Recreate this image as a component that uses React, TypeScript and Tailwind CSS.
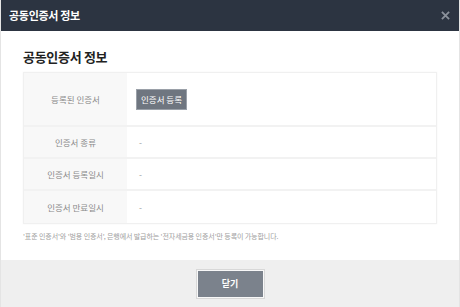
import React from 'react';

const rows = [
  { label: '인증서 종류', value: '-' },
  { label: '인증서 등록일시', value: '-' },
  { label: '인증서 만료일시', value: '-' },
];

const CertInfoModal = () => {
  return (
    <div
      className="w-[460px] h-[307px] flex flex-col bg-white border-x border-[#e4e4e4]"
      style={{ fontFamily: '"Noto Sans CJK KR", "Noto Sans", sans-serif' }}
    >
      {/* header */}
      <div className="h-[31px] shrink-0 bg-[#2c3441] flex items-center justify-between pl-[8px] pr-[9px]">
        <span className="text-[11px] font-bold text-white tracking-[-0.3px]">공동인증서 정보</span>
        <svg width="9" height="9" viewBox="0 0 10 10" className="text-[#8b919b]">
          <path d="M1 1L9 9M9 1L1 9" stroke="currentColor" strokeWidth="2" />
        </svg>
      </div>

      {/* body */}
      <div className="flex-1 px-[22px] pt-[17px]">
        <h2 className="text-[13px] font-bold text-[#222] leading-[18px] tracking-[-0.3px]">공동인증서 정보</h2>

        <div className="mt-[6px] border border-[#f0f0f0] shadow-[0_0_2px_rgba(0,0,0,0.04)] text-[8.5px]">
          <div className="flex h-[54px] border-b-2 border-[#f2f2f2]">
            <div className="w-[103px] bg-[#f8f8f8] flex items-center justify-center text-[#8a8a8a]">등록된 인증서</div>
            <div className="flex-1 flex items-center pl-[9px]">
              <button className="h-[21px] px-[4px] bg-[#6f7680] text-white text-[8.5px] border border-[#9aa0a8]">
                인증서 등록
              </button>
            </div>
          </div>
          {rows.map((r, i) => (
            <div
              key={r.label}
              className={`flex h-[32px] ${i < rows.length - 1 ? 'border-b-2 border-[#f2f2f2]' : ''}`}
            >
              <div className="w-[103px] bg-[#f8f8f8] flex items-center justify-center text-[#8a8a8a]">{r.label}</div>
              <div className="flex-1 flex items-center pl-[12px] text-[#999]">{r.value}</div>
            </div>
          ))}
        </div>

        <p className="mt-[7px] text-[7px] text-[#a0a0a0] tracking-[-0.1px]">
          '표준 인증서'와 '범용 인증서', 은행에서 발급하는 '전자세금용 인증서'만 등록이 가능합니다.
        </p>
      </div>

      {/* footer */}
      <div className="h-[47px] shrink-0 bg-[#efefef] flex items-center justify-center">
        <button className="w-[67px] h-[28px] bg-[#7b828c] border border-[#f8f8f8] shadow-[0_0_0_1px_#d8d8d8] text-white text-[9px] font-bold">
          닫기
        </button>
      </div>
    </div>
  );
};

export default CertInfoModal;
